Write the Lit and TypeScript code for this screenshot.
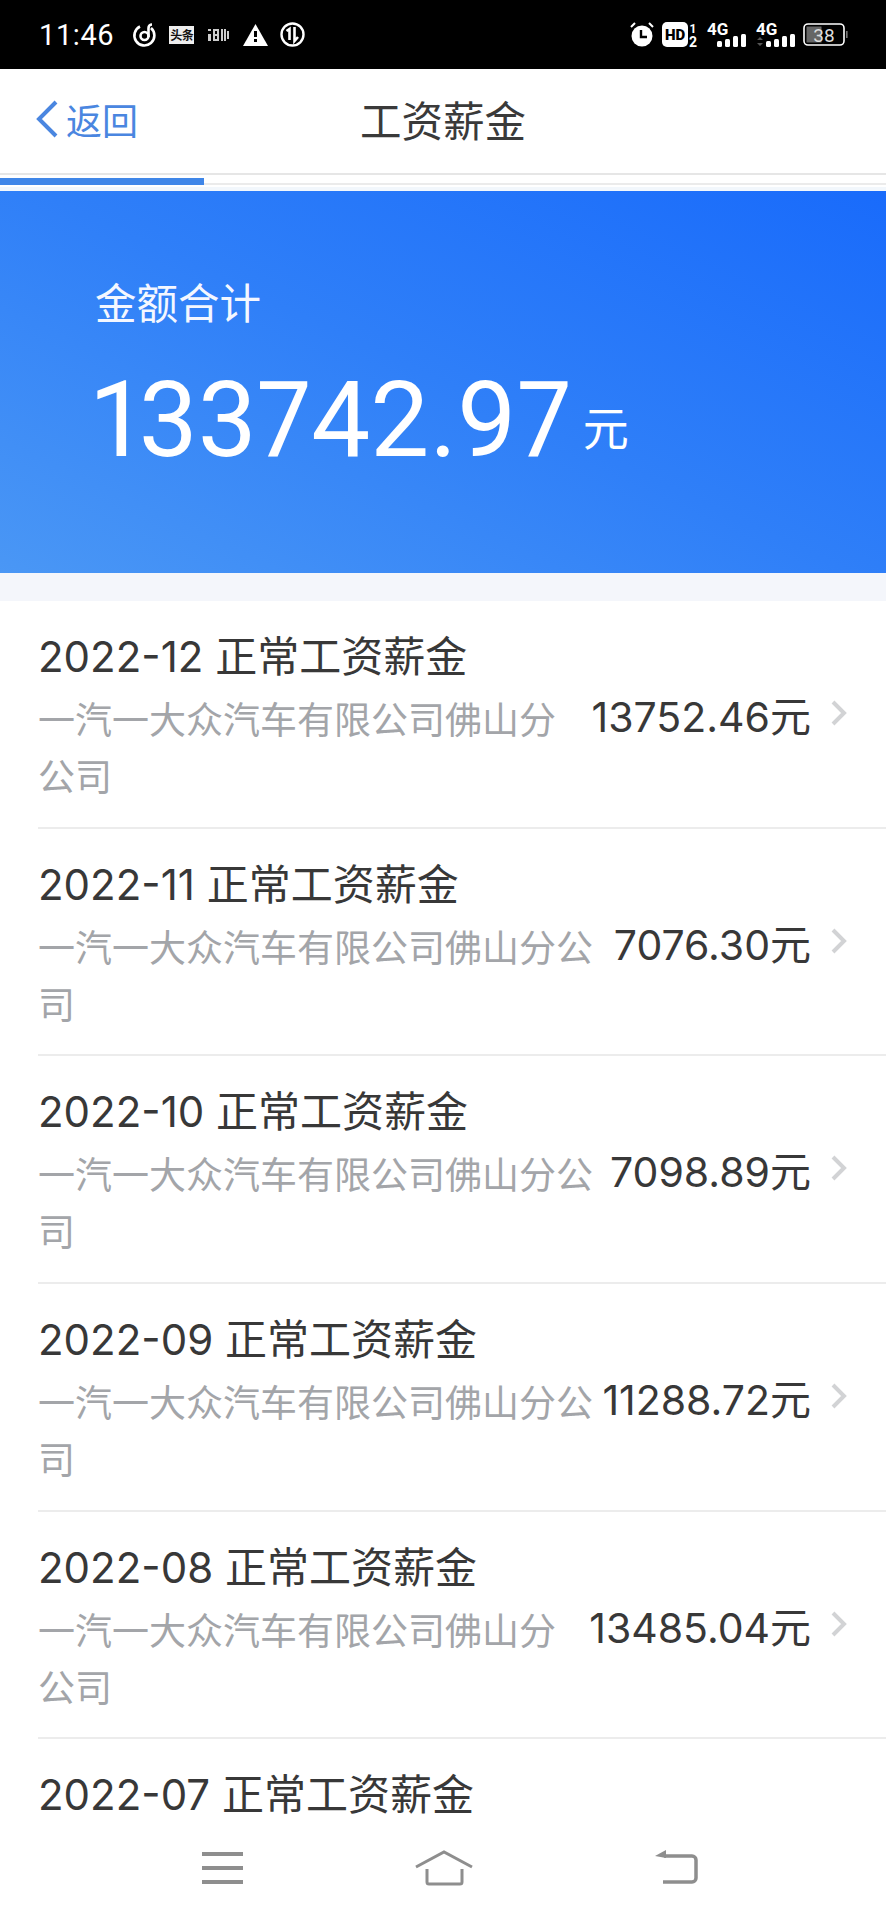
import { LitElement, html, css, svg } from "lit";
import { customElement } from "lit/decorators.js";

const FULL = "一汽一大众汽车有限公司佛山分公司";
const rows = [
  { t: "2022-12", a: "13752.46" },
  { t: "2022-11", a: "7076.30" },
  { t: "2022-10", a: "7098.89" },
  { t: "2022-09", a: "11288.72" },
  { t: "2022-08", a: "13485.04" },
  { t: "2022-07", a: "" },
];

@customElement("app-root")
export class AppRoot extends LitElement {
  static styles = css`
    :host { display: block; width: 886px; height: 1920px; overflow: hidden; background: #fff;
      font-family: Inter, "Noto Sans CJK SC", sans-serif; color: #333; }
    .page { height: 1920px; display: flex; flex-direction: column; }
    .status { height: 69px; flex: none; background: #000; color: #fff; display: flex; align-items: center;
      justify-content: space-between; padding: 0 37px 0 39px; box-sizing: border-box; font-family: Roboto, sans-serif; }
    .st-l, .st-r { display: flex; align-items: center; }
    .time { font-size: 29px; letter-spacing: 0.6px; margin-right: 19px; line-height: 34px; }
    .st-l svg, .st-r svg { display: block; flex: none; overflow: visible; }
    .i2 { margin-left: 13px; width: 25px; height: 18px; background: #eee; color: #111; font: 700 12px/18px "Noto Sans CJK SC", sans-serif;
      text-align: center; white-space: nowrap; letter-spacing: -0.5px; }
    .i3 { margin-left: 14px; }
    .i4 { margin-left: 14px; }
    .i5 { margin-left: 12px; }
    .r2 { margin-left: 8px; }
    .r3 { margin-left: 9px; }
    .r4 { margin-left: 8px; }
    .r5 { margin-left: 6px; }
    .nav { height: 104px; flex: none; display: flex; align-items: center; justify-content: center; position: relative; }
    .back { position: absolute; left: 36px; top: 27px; display: flex; align-items: center; color: #4a86e0; font-size: 36px; line-height: 46px; font-family: "Noto Sans CJK SC", sans-serif; }
    .back svg { margin-right: 8px; display: block; }
    .title { font-size: 41.5px; color: #3a3a3a; line-height: 50px; padding-bottom: 4px; font-family: "Noto Sans CJK SC", sans-serif; font-weight: 400; }
    .progress { height: 18px; flex: none; position: relative; background: #fff; border-top: 2px solid #e6e6e6; box-sizing: border-box; }
    .progress .track { position: absolute; left: 0; right: 0; top: 8px; height: 2px; background: #ebebeb; }
    .progress .fill { position: absolute; left: 0; top: 3px; height: 7px; width: 204px; background: #3f86e8; }
    .progress .glow { position: absolute; left: 0; right: 0; bottom: 0; height: 4px; background: #f2f7fc; }
    .hero { height: 382px; flex: none; background: linear-gradient(205deg, #196bfb 0%, #2f7ff8 50%, #4a97f5 100%);
      color: #fff; padding: 0 0 0 95px; box-sizing: border-box; }
    .hero .lbl { font-size: 41.5px; line-height: 50px; padding-top: 85px; color: #f4f7ff; font-family: "Noto Sans CJK SC", sans-serif; }
    .hero .val { display: flex; align-items: flex-end; margin-top: 30px; }
    .hero .num { font-family: Roboto, sans-serif; font-size: 105px; line-height: 130px; font-weight: 400; letter-spacing: 0.1px; margin-left: -2px; font-variant-numeric: proportional-nums; }
    .hero .unit { font-size: 46px; line-height: 50px; margin-left: 11px; margin-bottom: 36px; font-family: "Noto Sans CJK SC", sans-serif; }
    .gap { height: 28px; flex: none; background: #f4f6fb; }
    .list { flex: 1; min-height: 0; overflow: hidden; padding-left: 38px; }
    .row { height: 227.7px; box-sizing: border-box; border-bottom: 2px solid #ececec; padding-top: 30px; display: flex; flex-direction: column; }
    .row .h { font-size: 42px; line-height: 52px; color: #383838; }
    .row .b { display: flex; align-items: flex-start; padding-right: 39px; margin-top: 9px; }
    .row .sub { flex: 1; min-width: 0; font-size: 37px; line-height: 57px; color: #a3a5a9; word-break: break-all; }
    .row .amt { font-size: 41px; line-height: 50px; color: #383838; white-space: nowrap; }
    .row .ch { margin-left: 20px; margin-top: 8px; flex: none; display: block; }
    .bar { height: 100px; flex: none; background: #fff; position: relative; }
    .bar svg { display: block; position: absolute; top: 0; }
    .bar .m { left: 200px; }
    .bar .hm { left: 412px; }
    .bar .bk { left: 652px; }
  `;

  render() {
    return html`<div class="page">
      <div class="status">
        <div class="st-l">
          <span class="time">11:46</span>
          <svg width="23" height="25" viewBox="0 0 23 25" fill="none" stroke="#fff" stroke-width="2.6"><path d="M7 4.5A10 10 0 1 0 18 6"/><circle cx="11.5" cy="14" r="4"/><path d="M15.5 15V6a3.5 3.5 0 0 1 3.5-3.5"/></svg>
          <div class="i2">头条</div>
          <svg class="i3" width="21" height="14" viewBox="0 0 21 14" fill="#ccc"><rect x="0" y="1" width="3" height="2"/><rect x="0" y="6" width="3" height="7"/><path d="M5 1h6v12H5zM7 3v3h2V3zM7 8v3h2V8z" fill-rule="evenodd"/><path d="M13 1h2v12h-2zM16 1h2v12h-2zM19 3h2v8h-2z"/></svg>
          <svg class="i4" width="25" height="22" viewBox="0 0 25 22"><path d="M12.5 0L25 22H0Z" fill="#fff"/><rect x="11" y="7" width="3" height="6" fill="#000"/><rect x="11" y="15" width="3" height="3" fill="#000"/></svg>
          <svg class="i5" width="25" height="25" viewBox="0 0 25 25" fill="none" stroke="#fff"><circle cx="12.5" cy="12.5" r="11" stroke-width="2.4"/><path d="M6.5 9l3-2v11M14.5 5v14l3.5-4" stroke-width="2.6"/></svg>
        </div>
        <div class="st-r">
          <svg width="24" height="25" viewBox="0 0 24 25"><path d="M1 5l4-4M23 5l-4-4" stroke="#fff" stroke-width="2"/><circle cx="12" cy="14" r="10.5" fill="#fff"/><path d="M11 8v7h6" fill="none" stroke="#000" stroke-width="2.4"/></svg>
          <svg class="r2" width="36" height="26" viewBox="0 0 36 26"><rect width="26" height="25" rx="5" fill="#fff"/><text x="13" y="18" text-anchor="middle" font-size="15" font-weight="900" font-family="Roboto" fill="#000">HD</text><text x="31" y="11" text-anchor="middle" font-size="12" font-weight="700" font-family="Roboto" fill="#fff">1</text><text x="31" y="25" text-anchor="middle" font-size="14" font-weight="700" font-family="Roboto" fill="#fff">2</text></svg>
          ${this.signal(false, "r3")}
          ${this.signal(true, "r4")}
          <svg class="r5" width="46" height="24" viewBox="0 0 46 24"><rect x="1" y="1" width="40" height="21" rx="4" fill="none" stroke="#fff" stroke-width="1.6"/><rect x="3.5" y="3.5" width="15" height="16" fill="#666"/><text x="21" y="18.5" text-anchor="middle" font-size="19" font-family="Roboto" fill="#ddd">38</text><rect x="43" y="8" width="1.6" height="7" fill="#777"/></svg>
        </div>
      </div>
      <div class="nav">
        <div class="back">
          <svg width="22" height="38" viewBox="0 0 22 38" fill="none" stroke="#4a86e0" stroke-width="4"><path d="M20 2L3 19l17 17"/></svg>
          <span>返回</span>
        </div>
        <div class="title">工资薪金</div>
      </div>
      <div class="progress"><div class="track"></div><div class="glow"></div><div class="fill"></div></div>
      <div class="hero">
        <div class="lbl">金额合计</div>
        <div class="val"><span class="num">133742.97</span><span class="unit">元</span></div>
      </div>
      <div class="gap"></div>
      <div class="list">
        ${rows.map((r) => html`<div class="row">
          <div class="h">${r.t} 正常工资薪金</div>
          ${r.a ? html`<div class="b">
            <div class="sub">${FULL}</div>
            <div class="amt">${r.a}元</div>
            <svg class="ch" width="16" height="26" viewBox="0 0 16 26" fill="none" stroke="#d2d3d5" stroke-width="4"><path d="M2 2l11 11L2 24"/></svg>
          </div>` : ""}
        </div>`)}
      </div>
      <div class="bar">
        <svg class="m" width="46" height="100" viewBox="0 0 46 100" fill="#8e8e8e"><rect x="2" y="32" width="41" height="4"/><rect x="2" y="46" width="41" height="4"/><rect x="2" y="60" width="41" height="4"/></svg>
        <svg class="hm" width="62" height="100" viewBox="0 0 62 100" fill="none" stroke="#8e8e8e" stroke-width="3"><path d="M4 47L32 32l28 15" /><path d="M15 49v13a2 2 0 0 0 2 2h31a2 2 0 0 0 2-2V49"/></svg>
        <svg class="bk" width="46" height="100" viewBox="0 0 46 100" fill="none" stroke="#8e8e8e" stroke-width="3.5"><path d="M12 36h28a4 4 0 0 1 4 4v18a4 4 0 0 1-4 4H11"/><path d="M3 36l11-6v8z" fill="#8e8e8e" stroke="none"/></svg>
      </div>
    </div>`;
  }

  signal(arrows: boolean, cls: string) {
    return svg`<svg class=${cls} width="41" height="26" viewBox="0 0 41 26">
      <text x="0" y="13" font-size="17" font-weight="700" font-family="Roboto" fill="#fff">4G</text>
      ${arrows ? svg`<path d="M1 18l3-3 3 3zM1 21l3 3 3-3z" fill="#555"/>` : ""}
      <rect x="10" y="19" width="5" height="6" rx="1.5" fill="#fff"/><rect x="18" y="17" width="5" height="8" rx="1.5" fill="#fff"/><rect x="26" y="14" width="5" height="11" rx="1.5" fill="#fff"/><rect x="34" y="12" width="5" height="13" rx="1.5" fill="#fff"/>
    </svg>`;
  }
}
